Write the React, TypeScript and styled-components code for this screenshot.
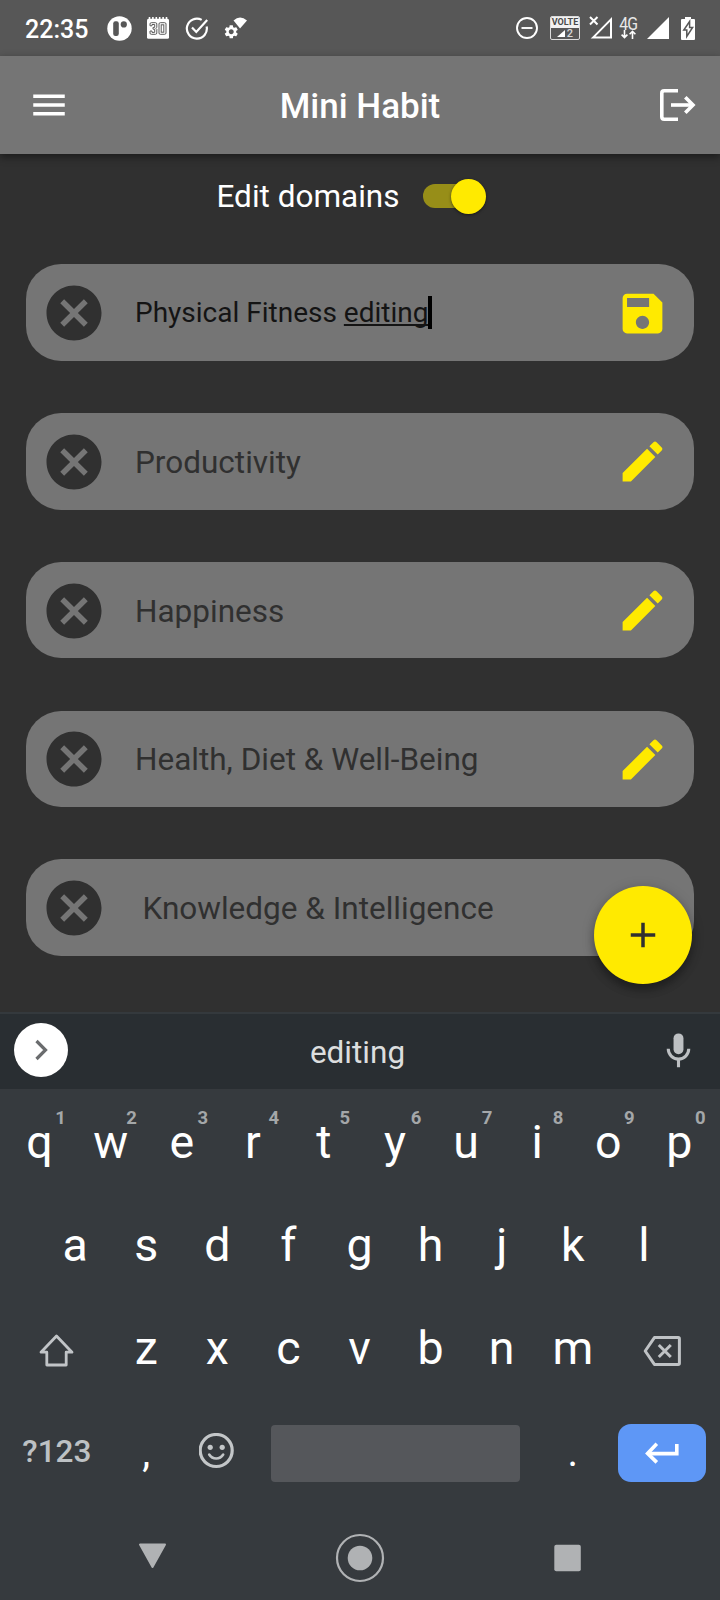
import React from "react";
import styled, { createGlobalStyle } from "styled-components";
import { MdAdd, MdCancel, MdEdit, MdMenu, MdSave, MdSettings } from "react-icons/md";

const GlobalStyle = createGlobalStyle`
  * { box-sizing: border-box; }
  body { margin: 0; background: #303030; font-family: Roboto, "Liberation Sans", sans-serif; }
  svg { display: block; flex: none; }
  button { border: 0; padding: 0; margin: 0; background: none; font: inherit; color: inherit; }
`;

const Screen = styled.div`
  position: relative;
  width: 720px;
  height: 1600px;
  display: flex;
  flex-direction: column;
  overflow: hidden;
  background: #303030;
  color: #fff;
`;

const StatusBar = styled.div`
  height: 56px;
  flex: none;
  display: flex;
  align-items: center;
  justify-content: space-between;
  padding: 0 25px 0 25px;
  background: #575757;
`;

const Notifications = styled.div`
  display: flex;
  align-items: center;
  gap: 15.5px;
`;

const SystemIcons = styled.div`
  display: grid;
  grid-template-columns: 34px 39px 29px 29px 34px 14px;
  align-items: center;
`;

const Clock = styled.span`
  width: 66px;
  font-size: 25px;
  font-weight: 500;
  line-height: 30px;
  padding-top: 3px;
`;

const VolteBadge = styled.div`
  width: 30px;
  height: 24px;
  border: 1.5px solid #dcdcdc;
  border-radius: 2px;
  display: flex;
  flex-direction: column;
  overflow: hidden;
`;

const VolteLabel = styled.span`
  height: 11px;
  background: #f2f2f2;
  color: #4a4a4a;
  font-size: 9px;
  font-weight: 700;
  line-height: 10px;
  text-align: center;
`;

const VolteSlot = styled.span`
  display: flex;
  align-items: center;
  justify-content: center;
  gap: 2px;
  height: 11px;
  color: #d8d8d8;
  font-size: 11px;
  font-weight: 500;
  line-height: 11px;
`;

const NetworkType = styled.div`
  width: 20px;
  height: 24px;
  display: flex;
  flex-direction: column;
  align-items: center;
  color: #e8e8e8;
  font-size: 18px;
  line-height: 13px;
  letter-spacing: -1px;
`;

const NetworkLabel = styled.span`
  height: 14px;
  padding-top: 1px;
  transform: scaleX(0.88);
`;

const AppBar = styled.header`
  position: relative;
  z-index: 1;
  height: 98px;
  flex: none;
  display: flex;
  align-items: center;
  justify-content: space-between;
  padding: 0 24px 0 28px;
  background: #757575;
  box-shadow: 0 3px 8px rgba(0, 0, 0, 0.45);
`;

const Title = styled.h1`
  margin: 0;
  padding-top: 3px;
  padding-right: 9px;
  font-size: 35px;
  font-weight: 500;
  line-height: 42px;
`;

const Content = styled.main`
  height: 858px;
  flex: none;
  overflow: hidden;
`;

const EditToggle = styled.div`
  height: 84px;
  display: flex;
  align-items: center;
  padding-left: 216.5px;
  gap: 23.5px;
  font-size: 31.5px;
`;

const ToggleLabel = styled.span`
  width: 183px;
  white-space: nowrap;
`;

const Switch = styled.span`
  width: 63px;
  height: 24.5px;
  display: flex;
  align-items: center;
  justify-content: flex-end;
  border-radius: 13px;
  background: linear-gradient(#978e18, #978e18) left / 52px 100% no-repeat;
`;

const Thumb = styled.span`
  width: 35px;
  height: 35px;
  flex: none;
  border-radius: 50%;
  background: #ffea00;
  box-shadow: 0 1px 3px rgba(0, 0, 0, 0.5);
`;

const DomainList = styled.ul`
  list-style: none;
  margin: 0;
  padding: 26.25px 26px 0;
  display: flex;
  flex-direction: column;
  gap: 52.25px;
`;

const DomainCard = styled.li`
  height: 96.5px;
  flex: none;
  display: flex;
  align-items: center;
  padding: 1px 25px 0 14.5px;
  border-radius: 35px;
  background: #757575;
  color: #303030;
`;

const DomainName = styled.span<{ $indent?: boolean }>`
  flex: 1;
  padding-left: ${(p) => (p.$indent ? 36 : 28.5)}px;
  padding-top: 1px;
  font-size: 31.5px;
  white-space: nowrap;
`;

const DomainField = styled.span`
  flex: 1;
  display: flex;
  align-items: center;
  padding: 0 0 1px 28.5px;
  font-size: 28px;
  color: #141414;
  white-space: pre;
`;

const Composing = styled.span`
  text-decoration: underline;
  text-decoration-thickness: 1.5px;
  text-underline-offset: 2px;
  text-decoration-skip-ink: none;
`;

const Caret = styled.span`
  width: 4px;
  height: 33px;
  background: #000;
`;

const CardAction = styled.button`
  color: #ffea00;
`;

const AddButton = styled.button`
  position: absolute;
  left: 594px;
  top: 886px;
  width: 98px;
  height: 98px;
  display: flex;
  align-items: center;
  justify-content: center;
  border-radius: 50%;
  background: #ffea00;
  color: #303030;
  box-shadow: 0 6px 9px rgba(0, 0, 0, 0.3), 0 2px 14px rgba(0, 0, 0, 0.16);
`;

const Keyboard = styled.section`
  height: 588px;
  flex: none;
  display: flex;
  flex-direction: column;
  background: #363a3e;
`;

const SuggestionStrip = styled.div`
  height: 77px;
  flex: none;
  display: flex;
  align-items: center;
  justify-content: space-between;
  padding: 0 21px 0 14px;
  border-top: 2px solid #34393d;
  background: #292e32;
`;

const ExpandButton = styled.button`
  width: 54px;
  height: 54px;
  margin-bottom: 4px;
  display: flex;
  align-items: center;
  justify-content: center;
  border-radius: 50%;
  background: #fff;
`;

const Suggestion = styled.span`
  font-size: 31.5px;
  padding-top: 1px;
  padding-right: 11px;
  color: #dcdedf;
`;

const MicGlyph = styled.svg`
  margin-bottom: 2px;
`;

const KeyRow = styled.div<{ $inset?: number }>`
  height: 103px;
  flex: none;
  display: flex;
  padding: 0 ${(p) => (p.$inset ?? 4) + 1}px 0 ${(p) => p.$inset ?? 4}px;
`;

const KeyRows = styled.div`
  flex: 1;
  padding-top: 1.5px;
`;

const Key = styled.button<{ $span?: number; $drop?: number }>`
  position: relative;
  flex: ${(p) => p.$span ?? 1} 1 0;
  min-width: 0;
  display: flex;
  align-items: center;
  justify-content: center;
  padding-top: ${(p) => p.$drop ?? 0}px;
  font-size: 46.5px;
  color: #fff;
`;

const Hint = styled.span`
  position: absolute;
  left: 46.5px;
  top: 17px;
  width: 20px;
  font-size: 18.5px;
  font-weight: 700;
  line-height: 20px;
  text-align: center;
  color: #a4a7a9;
`;

const SymbolsLabel = styled.span`
  font-size: 31.5px;
  font-weight: 500;
  color: #bdc1c4;
  padding-right: 1px;
`;

const Punctuation = styled.span`
  font-size: 40px;
`;

const SpaceBar = styled.span`
  width: 249px;
  height: 57px;
  border-radius: 4px;
  background: #55575b;
`;

const EnterCap = styled.span`
  width: 88px;
  height: 58px;
  margin-left: 1px;
  display: flex;
  align-items: center;
  justify-content: center;
  border-radius: 13px;
  background: #5e97f6;
`;

const NavBar = styled.nav`
  height: 84px;
  flex: none;
  display: flex;
  align-items: center;
  justify-content: space-between;
  padding: 0 138px;
`;

const BackIcon = styled.svg`
  margin-bottom: 4px;
`;

const HomeIcon = styled.svg`
  margin-right: 1.5px;
`;

const domains = [
  { name: "Productivity" },
  { name: "Happiness" },
  { name: "Health, Diet & Well-Being" },
  { name: "Knowledge & Intelligence", indent: true },
];

const ParkingIcon = () => (
  <svg width="25" height="25" viewBox="0 0 25 25">
    <circle cx="12.5" cy="12.5" r="12.2" fill="#fff" />
    <rect x="6.2" y="5.2" width="5.6" height="14.8" rx="2.2" fill="#575757" />
    <circle cx="16.8" cy="8.4" r="3.1" fill="#575757" />
  </svg>
);

const CalendarIcon = () => (
  <svg width="22" height="22" viewBox="0 0 22 22">
    <rect y="1.8" width="22" height="20" rx="1.5" fill="#fff" />
    <path d="M2.5 0v3M5.9 0v3M9.3 0v3M12.7 0v3M16.1 0v3M19.5 0v3" stroke="#fff" strokeWidth="1.6" />
    <g fill="none" stroke="#5c5c5c" strokeWidth="1">
      <path d="M3 8.8V7q0-1.3 1.3-1.3h4.2q1.3 0 1.3 1.3v3.3l-1 1 1 1V16q0 1.3-1.3 1.3H4.3q-1.3 0-1.3-1.3v-2h2v1.4h2.7v-3.2H6v-1.8h1.7V7.5H5v1.3Z" />
      <rect x="12" y="5.7" width="7" height="11.6" rx="1.3" />
      <rect x="14.2" y="7.8" width="2.6" height="7.4" />
    </g>
  </svg>
);

const TaskDoneIcon = () => (
  <svg width="24" height="24" viewBox="0 0 24 24" fill="none" stroke="#fff" strokeWidth="2.2">
    <path d="M16.7 3.9A10 10 0 1 0 21.6 10.4" />
    <path d="M7 11.4l4.3 4.5L22.2 4" />
  </svg>
);

const WifiSettingsIcon = () => (
  <svg width="24" height="24" viewBox="0 0 24 24">
    <path d="M9.5 4.6Q16 -1.6 23 4.6L16 12.5Z" fill="#fff" />
    <MdSettings x="-1" y="7.5" size={16.5} color="#fff" />
  </svg>
);

const DoNotDisturbIcon = () => (
  <svg width="22" height="22" viewBox="0 0 22 22" fill="none" stroke="#fff">
    <circle cx="11" cy="11" r="10" strokeWidth="1.9" />
    <path d="M5.5 11h11" strokeWidth="1.9" />
  </svg>
);

const NoSignalIcon = () => (
  <svg width="24" height="24" viewBox="0 0 24 24" fill="none" stroke="#fff">
    <path d="M4 21.6L22 3.4V21.6Z" strokeWidth="2" />
    <path d="M1 1l7.5 7.5M8.5 1L1 8.5" strokeWidth="2" />
  </svg>
);

const SignalIcon = () => (
  <svg width="22" height="22" viewBox="0 0 22 22">
    <path d="M0 22L22 0V22Z" fill="#fff" />
  </svg>
);

const BatteryIcon = () => (
  <svg width="14" height="23" viewBox="0 0 14 23">
    <path d="M4 0h6v2h3q1 0 1 1v19q0 1-1 1H1q-1 0-1-1V3q0-1 1-1h3Z" fill="#fff" />
    <path d="M8.6 4.5L2.8 13h3v6.5l5.8-9H8.6Z" fill="#fff" stroke="#575757" strokeWidth="1.5" />
  </svg>
);

const DataArrows = () => (
  <svg width="17" height="9" viewBox="0 0 17 9" fill="none" stroke="#fff" strokeWidth="1.6">
    <path d="M4.5 0v7M1.6 4.6l2.9 2.9 2.9-2.9M12.5 9V1.5M9.6 4.2l2.9-2.9 2.9 2.9" />
  </svg>
);

const LogoutIcon = () => (
  <svg width="37" height="34" viewBox="0 0 37 34" fill="none" stroke="#fff" strokeWidth="3.6">
    <path d="M19 2.8H5.2Q2.8 2.8 2.8 5.2V28.8Q2.8 31.2 5.2 31.2H19" />
    <path d="M12 17H34" />
    <path d="M26.3 9.3L34 17l-7.7 7.7" />
  </svg>
);

const MicIcon = () => (
  <MicGlyph width="41" height="41" viewBox="0 0 24 24">
    <rect x="9.1" y="2" width="5.8" height="12.2" rx="2.9" fill="#bdc0c3" />
    <path d="M6 11a6 6 0 0 0 12 0M12 17v4.8" fill="none" stroke="#bdc0c3" strokeWidth="1.8" />
  </MicGlyph>
);

const ShiftIcon = () => (
  <svg width="36" height="34" viewBox="0 0 36 34">
    <path
      d="M17.5 2L33 18.2H27.2V31H7.8V18.2H2Z"
      fill="none"
      stroke="#c1c4c7"
      strokeWidth="2.8"
      strokeLinejoin="round"
    />
  </svg>
);

const BackspaceIcon = () => (
  <svg width="38" height="30" viewBox="0 0 38 30" fill="none" stroke="#bfc2c5" strokeWidth="3" strokeLinejoin="round">
    <path d="M11.4 1.6H35.2q1.2 0 1.2 1.2V27.2q0 1.2-1.2 1.2H11.4L2.2 15Z" />
    <path d="M15.8 9l12 12M27.8 9l-12 12" />
  </svg>
);

const SmileIcon = () => (
  <svg width="36" height="36" viewBox="0 0 36 36" fill="none" stroke="#c3c6c8">
    <circle cx="17.2" cy="17.5" r="16" strokeWidth="3.2" />
    <circle cx="11.2" cy="14.3" r="2.6" fill="#c3c6c8" stroke="none" />
    <circle cx="23.2" cy="14.3" r="2.6" fill="#c3c6c8" stroke="none" />
    <path d="M10.2 21.5Q12.7 25.5 17.2 25.5T24.2 21.5" strokeWidth="2.6" strokeLinecap="round" />
  </svg>
);

const EnterIcon = () => (
  <svg width="34" height="22" viewBox="0 0 34 22" fill="none" stroke="#fff" strokeWidth="3.6">
    <path d="M31.8 2V11.6H3" />
    <path d="M11.8 1.8L2.6 11.4l9.2 9" />
  </svg>
);

const ChevronIcon = () => (
  <svg width="14" height="22" viewBox="0 0 14 22" fill="none" stroke="#6a6c6e" strokeWidth="3.2">
    <path d="M2.5 2L11.5 11l-9 9" />
  </svg>
);

const TopRow = () => (
  <KeyRow>
    {"qwertyuiop".split("").map((letter, i) => (
      <Key key={letter}>
        {letter}
        <Hint>{(i + 1) % 10}</Hint>
      </Key>
    ))}
  </KeyRow>
);

export default function App() {
  return (
    <Screen>
      <GlobalStyle />
      <StatusBar>
        <Notifications>
          <Clock>22:35</Clock>
          <ParkingIcon />
          <CalendarIcon />
          <TaskDoneIcon />
          <WifiSettingsIcon />
        </Notifications>
        <SystemIcons>
          <DoNotDisturbIcon />
          <VolteBadge>
            <VolteLabel>VOLTE</VolteLabel>
            <VolteSlot>
              <svg width="8" height="7" viewBox="0 0 8 7">
                <path d="M0 7L8 0V7Z" fill="#fff" />
              </svg>
              2
            </VolteSlot>
          </VolteBadge>
          <NoSignalIcon />
          <NetworkType>
            <NetworkLabel>4G</NetworkLabel>
            <DataArrows />
          </NetworkType>
          <SignalIcon />
          <BatteryIcon />
        </SystemIcons>
      </StatusBar>

      <AppBar>
        <MdMenu size={42} />
        <Title>Mini Habit</Title>
        <LogoutIcon />
      </AppBar>

      <Content>
        <EditToggle>
          <ToggleLabel>Edit domains</ToggleLabel>
          <Switch role="switch" aria-checked="true">
            <Thumb />
          </Switch>
        </EditToggle>
        <DomainList>
          <DomainCard>
            <MdCancel size={66} />
            <DomainField>
              {"Physical Fitness "}
              <Composing>editing</Composing>
              <Caret />
            </DomainField>
            <CardAction aria-label="Save">
              <MdSave size={53} />
            </CardAction>
          </DomainCard>
          {domains.map((d) => (
            <DomainCard key={d.name}>
              <MdCancel size={66} />
              <DomainName $indent={d.indent}>{d.name}</DomainName>
              <CardAction aria-label="Edit">
                <MdEdit size={53} />
              </CardAction>
            </DomainCard>
          ))}
        </DomainList>
      </Content>

      <AddButton aria-label="Add">
        <MdAdd size={42} />
      </AddButton>

      <Keyboard>
        <SuggestionStrip>
          <ExpandButton aria-label="Expand">
            <ChevronIcon />
          </ExpandButton>
          <Suggestion>editing</Suggestion>
          <MicIcon />
        </SuggestionStrip>
        <KeyRows>
          <TopRow />
          <KeyRow $inset={39.5}>
            {"asdfghjkl".split("").map((letter) => (
              <Key key={letter}>{letter}</Key>
            ))}
          </KeyRow>
          <KeyRow>
            <Key $span={1.5} $drop={5} aria-label="Shift">
              <ShiftIcon />
            </Key>
            {"zxcvbnm".split("").map((letter) => (
              <Key key={letter}>{letter}</Key>
            ))}
            <Key $span={1.5} $drop={6} aria-label="Backspace">
              <BackspaceIcon />
            </Key>
          </KeyRow>
          <KeyRow>
            <Key $span={1.5}>
              <SymbolsLabel>?123</SymbolsLabel>
            </Key>
            <Key $drop={3}>
              <Punctuation>,</Punctuation>
            </Key>
            <Key aria-label="Emoji">
              <SmileIcon />
            </Key>
            <Key $span={4} $drop={4} aria-label="Space">
              <SpaceBar />
            </Key>
            <Key $drop={3}>
              <Punctuation>.</Punctuation>
            </Key>
            <Key $span={1.5} $drop={4} aria-label="Enter">
              <EnterCap>
                <EnterIcon />
              </EnterCap>
            </Key>
          </KeyRow>
        </KeyRows>
        <NavBar>
          <BackIcon width="29" height="26" viewBox="0 0 29 26">
            <path d="M2 1.5H27L14.5 24Z" fill="#b0b2b4" stroke="#b0b2b4" strokeWidth="2" strokeLinejoin="round" />
          </BackIcon>
          <HomeIcon width="50" height="50" viewBox="0 0 50 50">
            <circle cx="25" cy="25" r="23" fill="none" stroke="#b0b2b4" strokeWidth="2.2" />
            <circle cx="25" cy="25" r="12.3" fill="#b0b2b4" />
          </HomeIcon>
          <svg width="28" height="28" viewBox="0 0 28 28">
            <rect x="0.3" y="0.8" width="26.5" height="26.5" rx="2" fill="#b0b2b4" />
          </svg>
        </NavBar>
      </Keyboard>
    </Screen>
  );
}
